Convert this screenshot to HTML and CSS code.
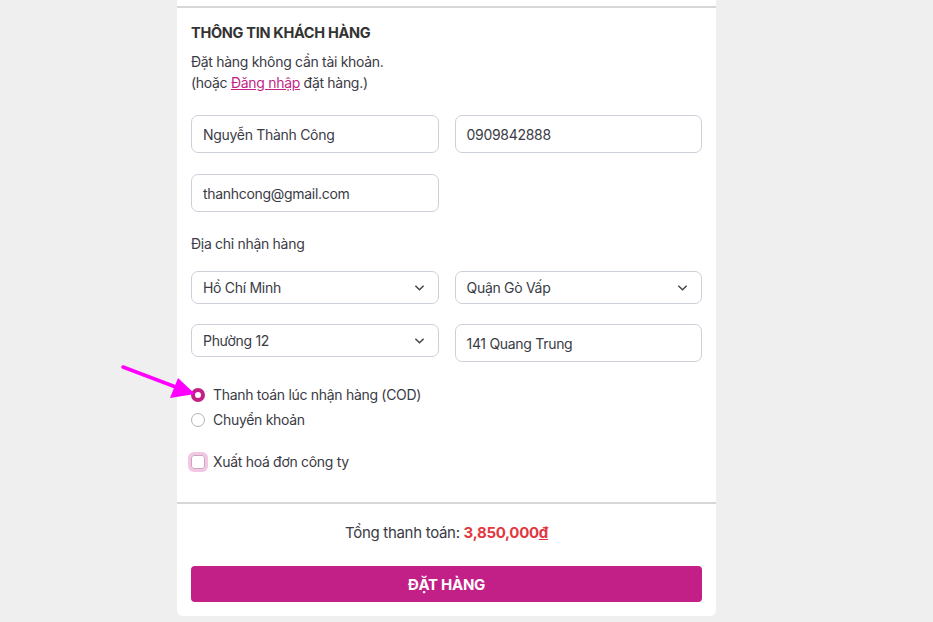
FILE: index.html
```html
<!DOCTYPE html>
<html lang="vi">
<head>
<meta charset="utf-8">
<meta name="viewport" content="width=device-width, initial-scale=1.0">
<title>Thông tin khách hàng</title>
<link rel="stylesheet" href="styles.css">
</head>
<body>

<div class="card">
  <div class="sec">
    <h2 class="title">THÔNG TIN KHÁCH HÀNG</h2>
    <div class="desc">Đặt hàng không cần tài khoản.<br>(hoặc <a href="#">Đăng nhập</a> đặt hàng.)</div>

    <div class="grid">
      <div class="field">Nguyễn Thành Công</div>
      <div class="field">0909842888</div>
      <div class="field">thanhcong@gmail.com</div>
    </div>

    <div class="label">Địa chỉ nhận hàng</div>
    <div class="grid addr">
      <div class="sel">Hồ Chí Minh<svg viewBox="0 0 12 8"><path d="M1.5 1.5 6 6l4.5-4.5"/></svg></div>
      <div class="sel">Quận Gò Vấp<svg viewBox="0 0 12 8"><path d="M1.5 1.5 6 6l4.5-4.5"/></svg></div>
      <div class="sel">Phường 12<svg viewBox="0 0 12 8"><path d="M1.5 1.5 6 6l4.5-4.5"/></svg></div>
      <div class="field">141 Quang Trung</div>
    </div>

    <div class="opts">
      <label class="opt"><span class="radio on"></span>Thanh toán lúc nhận hàng (COD)</label>
      <label class="opt"><span class="radio"></span>Chuyển khoản</label>
    </div>
    <label class="opt chk"><span class="box"></span>Xuất hoá đơn công ty</label>
  </div>

  <div class="foot">
    <div class="total">Tổng thanh toán: <b>3,850,000<u>đ</u></b></div>
    <button class="order">ĐẶT HÀNG</button>
  </div>
</div>

<svg class="arrow" width="90" height="50" viewBox="0 0 90 50">
  <path d="M2 2 60 24" stroke="#f0f" stroke-width="3.5" stroke-linecap="round" fill="none"/>
  <path d="M74 29 57 13 49 33Z" fill="#f0f"/>
</svg>

</body>
</html>
```

FILE: styles.css
```css
body {
  margin: 0;
  background: #efefef;
  font-family: Inter, "Noto Sans", sans-serif;
  color: #3b3b45;
  font-size: 14px;
  letter-spacing: -0.3px;
}
.card {
  width: 539px;
  margin-left: 177px;
  padding-top: 6px;
  background: #fff;
  border-radius: 0 0 6px 6px;
}
.sec {
  border-top: 2px solid #d7d7d7;
  padding: 15px 14px 30px;
}
.title {
  margin: 0;
  font-size: 14.5px;
  line-height: 20px;
  font-weight: 700;
  color: #333;
}
.desc {
  margin-top: 8px;
  line-height: 21px;
}
.desc a {
  color: #c21f87;
}
.grid {
  margin-top: 22px;
  display: grid;
  grid-template-columns: 1fr 1fr;
  column-gap: 16px;
  row-gap: 21px;
}
.field, .sel {
  box-sizing: border-box;
  height: 38px;
  border: 1px solid #ccd0d8;
  border-radius: 7px;
  padding: 0 11px;
  display: flex;
  align-items: center;
}
.sel {
  height: 33px;
  justify-content: space-between;
}
.sel svg {
  width: 11px;
  height: 8px;
  margin-right: 2px;
  fill: none;
  stroke: #444;
  stroke-width: 1.6;
}
.label {
  margin-top: 22px;
  line-height: 20px;
}
.addr {
  margin-top: 17px;
  row-gap: 20px;
  align-items: start;
}
.opts {
  margin-top: 23px;
  display: flex;
  flex-direction: column;
  gap: 5px;
}
.opt {
  display: flex;
  align-items: center;
  gap: 8px;
  line-height: 20px;
}
.radio {
  box-sizing: border-box;
  width: 14px;
  height: 14px;
  border: 1px solid #b5b5b5;
  border-radius: 50%;
}
.radio.on {
  border: 4px solid #c21f87;
}
.chk {
  margin-top: 22px;
}
.box {
  box-sizing: border-box;
  width: 14px;
  height: 14px;
  border: 1px solid #c9a7be;
  border-radius: 3px;
  box-shadow: 0 0 0 3px #f3c6e3;
}
.foot {
  border-top: 2px solid #d7d7d7;
  padding: 19px 14px 14px;
}
.total {
  text-align: center;
  font-size: 15px;
  line-height: 20px;
}
.total b {
  color: #e2383f;
}
.order {
  margin-top: 23px;
  width: 100%;
  height: 36px;
  border: 0;
  border-radius: 4px;
  background: #c21f87;
  color: #fff;
  font: 700 15px Inter, "Noto Sans", sans-serif;
  letter-spacing: -0.3px;
}
.arrow {
  position: absolute;
  left: 121px;
  top: 365px;
}
```
